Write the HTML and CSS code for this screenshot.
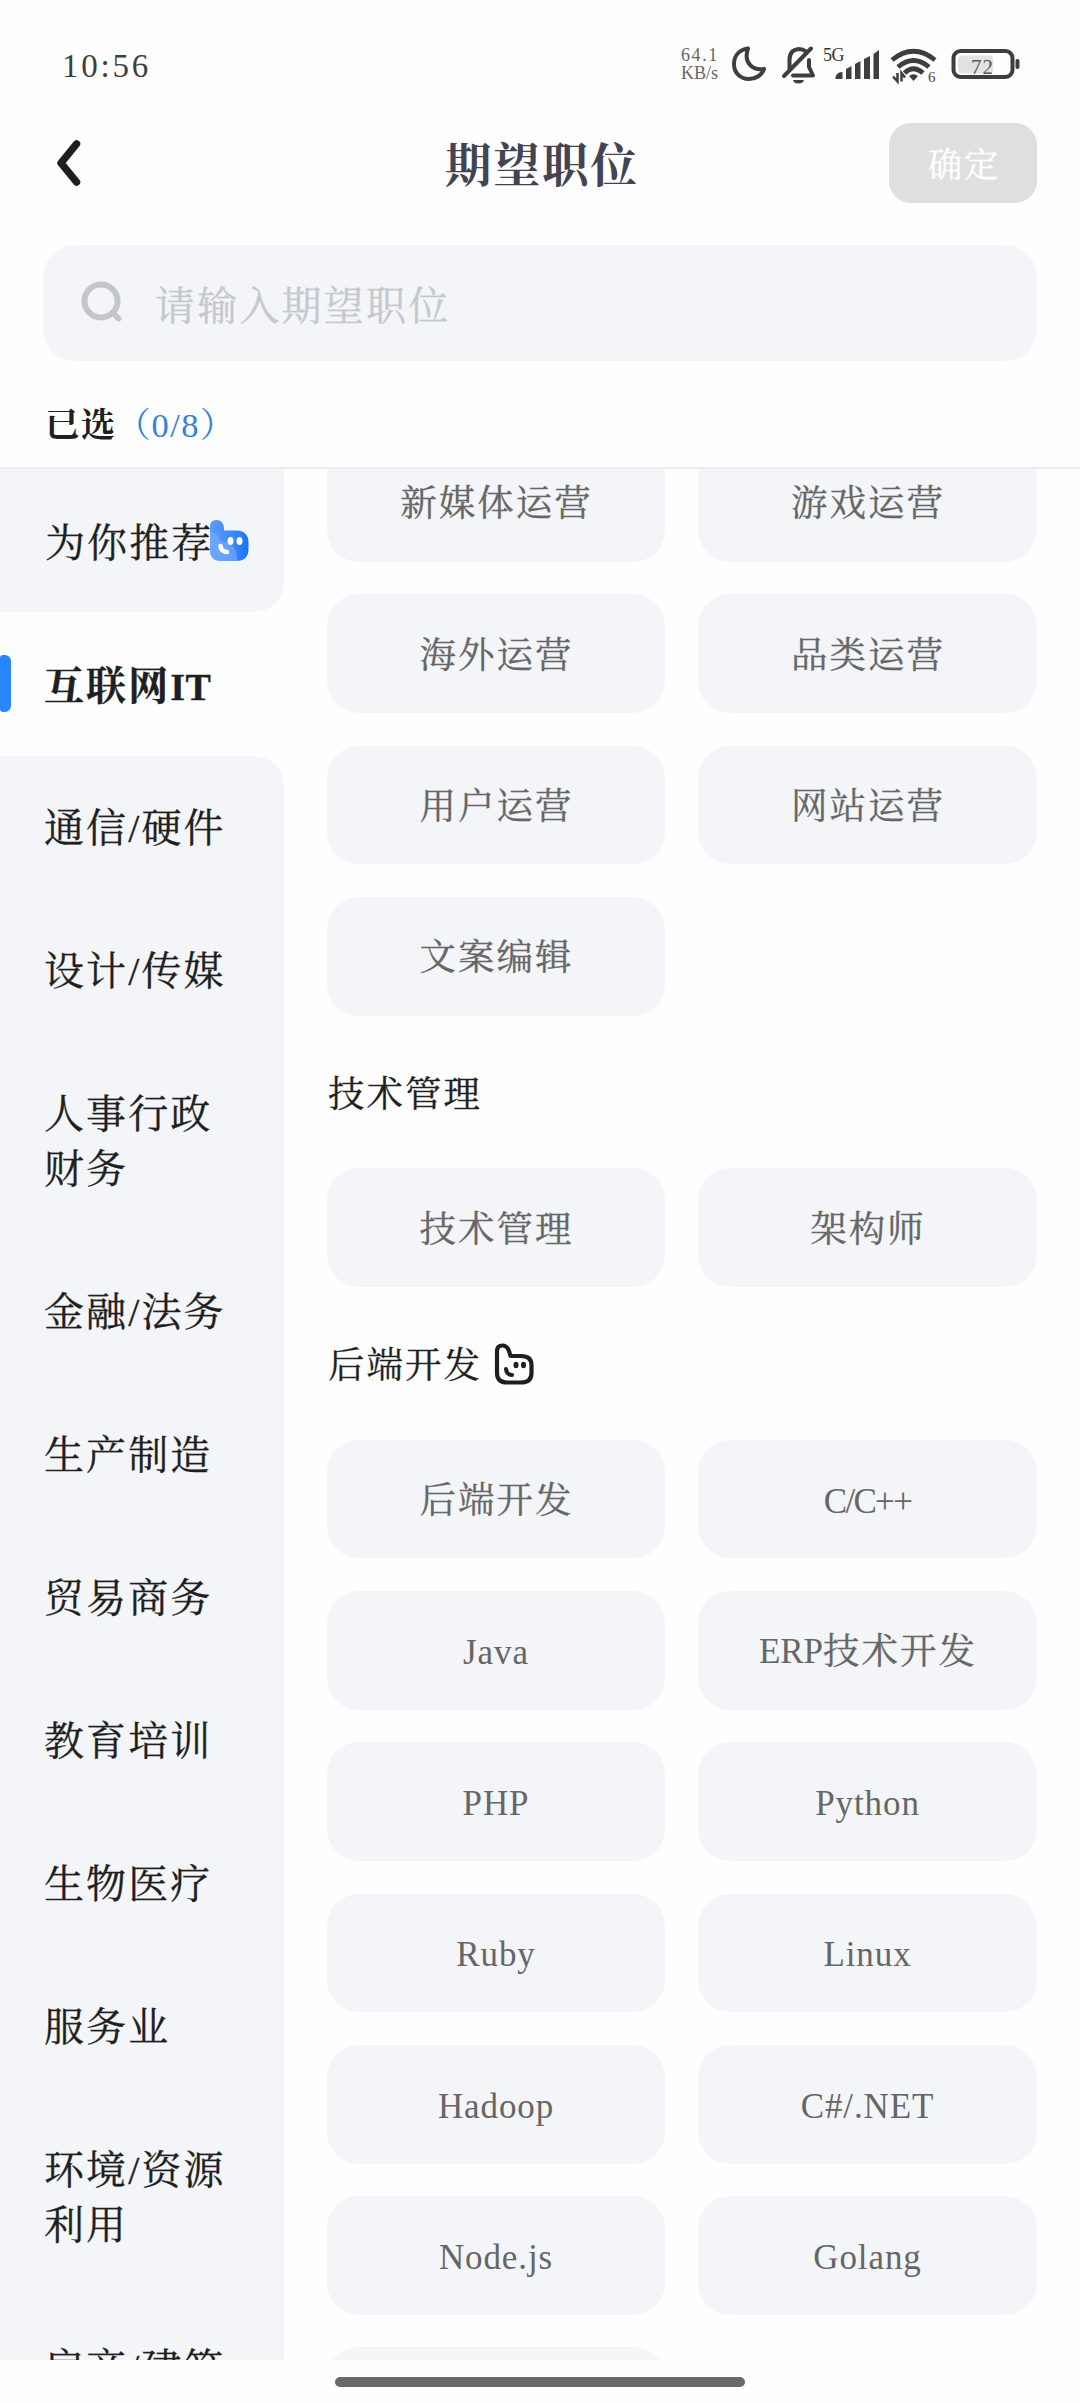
FILE: index.html
```html
<!DOCTYPE html>
<html lang="zh-CN">
<head>
<meta charset="utf-8">
<title>期望职位</title>
<link rel="stylesheet" href="styles.css">
</head>
<body>
<div class="screen">
  <div class="status">
    <span class="clock">10:56</span>
    <div class="net"><span>64.1</span><span class="unit">KB/s</span></div>
    <svg class="status-icons" viewBox="0 0 340 50" width="340" height="50">
      <g fill="none" stroke="#3e3e3e" stroke-width="4" stroke-linejoin="round" stroke-linecap="round">
        <path d="M19 10.500C9 12 5 19 5 26C5 35 11.500 41 20 41C27 41 33 37 35 31C24 33 14 25 19 10.500Z"/>
        <path d="M60.500 31V22C60.500 15 64 11.500 70 11Q74 11 77 13.500M64 37.500H84L80 29V22M55 38L82 10.500"/>
        <rect x="224.500" y="13" width="59" height="26" rx="7"/>
        <path d="M288.500 23V29"/>
      </g>
      <path d="M64 42H75Q74 45.500 69.500 45.500Q65 45.500 64 42Z" fill="#3e3e3e"/>
      <path d="M106.500 41V39Q108 34 113.500 34V41ZM117 41V31L122.500 28V41ZM126 41V26L131.500 23V41ZM135 41V21L141 18V41ZM144.500 41V16L150 12V41Z" fill="#3e3e3e"/>
      <g fill="none" stroke="#3e3e3e" stroke-width="4.800">
        <path d="M163 22Q184.500 4.500 206 22"/>
        <path d="M169 29Q184.500 16 200 29"/>
        <path d="M175.500 35Q184.500 26.500 194 35"/>
      </g>
      <path d="M180 38Q184.500 34.500 189 38L184.500 43Z" fill="#3e3e3e"/>
      <path d="M168.500 35V43.500L164 38.500M172.500 43.500V35L176 39.500" fill="none" stroke="#3e3e3e" stroke-width="2.500"/>
      <rect x="229" y="17.500" width="35" height="18" rx="4" fill="#e2e2e2"/>
      <text x="94" y="23" class="t5g">5G</text>
      <text x="199" y="44" class="t6">6</text>
      <text x="242" y="35.500" class="t72">72</text>
    </svg>
  </div>

  <header class="nav">
    <svg class="back" viewBox="0 0 26 48" width="26" height="48"><path d="M20.500 5L5 24L20.500 43" fill="none" stroke="#1f1f1f" stroke-width="7.500" stroke-linecap="round" stroke-linejoin="round"/></svg>
    <h1 class="title">期望职位</h1>
    <button class="confirm">确定</button>
  </header>

  <div class="search">
    <svg viewBox="0 0 44 44" width="44" height="44"><g fill="none" stroke="#c3c6ca" stroke-width="6" stroke-linecap="round"><circle cx="21" cy="21" r="16.500"/><path d="M33.500 33.500L38.500 38.500"/></g></svg>
    <span>请输入期望职位</span>
  </div>

  <div class="picked"><b>已选</b><span class="count">（<span class="num">0/8</span>）</span></div>

  <main class="body">
    <nav class="side">
      <div class="item before">为你推荐<svg class="thumb" viewBox="0 0 40 42" width="40" height="42">
        <defs><linearGradient id="blue" x1="0" y1="0" x2="1" y2="0"><stop offset="0" stop-color="#5b9bfa"/><stop offset=".55" stop-color="#4289fa"/><stop offset="1" stop-color="#1673ff"/></linearGradient></defs>
        <path d="M1 7Q1 0 7.500 0Q14 0 15 8V10.500H27Q39.500 10.500 39.500 23V29Q39.500 41 27 41H12Q1 41 1 30Z" fill="url(#blue)"/>
        <path d="M1 12Q10 13 12 21Q29 23 28 41H12Q1 41 1 30Z" fill="#7eb0ff" opacity=".55"/>
        <g fill="#fff"><ellipse cx="21.500" cy="21" rx="3" ry="4"/><ellipse cx="30.500" cy="21" rx="3" ry="4"/></g>
        <path d="M11.500 26Q12 31.500 18 32" fill="none" stroke="#fff" stroke-width="4.500" stroke-linecap="round"/>
      </svg></div>
      <div class="item active">互联网<span class="it">IT</span></div>
      <div class="rest">
        <div class="item">通信/硬件</div>
        <div class="item">设计/传媒</div>
        <div class="item">人事行政<br>财务</div>
        <div class="item">金融/法务</div>
        <div class="item">生产制造</div>
        <div class="item">贸易商务</div>
        <div class="item">教育培训</div>
        <div class="item">生物医疗</div>
        <div class="item">服务业</div>
        <div class="item">环境/资源<br>利用</div>
        <div class="item">房产/建筑</div>
      </div>
    </nav>
    <div class="jobs">
      <div class="grid first">
        <div class="chip">新媒体运营</div><div class="chip">游戏运营</div>
        <div class="chip">海外运营</div><div class="chip">品类运营</div>
        <div class="chip">用户运营</div><div class="chip">网站运营</div>
        <div class="chip">文案编辑</div>
      </div>
      <h2 class="group">技术管理</h2>
      <div class="grid">
        <div class="chip">技术管理</div><div class="chip">架构师</div>
      </div>
      <h2 class="group">后端开发<svg class="thumb-line" viewBox="0 0 40 42" width="40" height="42"><g fill="none" stroke="#1f1f1f" stroke-linecap="round" stroke-linejoin="round"><path d="M3 8Q3 2.500 8.500 2.500Q13 2.500 15 8L16.500 13H27Q37.500 13 37.500 22V30Q37.500 39.500 27 39.500H13Q3 39.500 3 30Z" stroke-width="4.200"/><path d="M12 26Q12.500 31.500 18 32" stroke-width="4"/></g><ellipse cx="22" cy="22" rx="2.500" ry="3.300" fill="#1f1f1f"/><ellipse cx="29.500" cy="22" rx="2.500" ry="3.300" fill="#1f1f1f"/></svg></h2>
      <div class="grid">
        <div class="chip">后端开发</div><div class="chip latin tight">C/C++</div>
        <div class="chip latin">Java</div><div class="chip"><span class="erp">ERP</span>技术开发</div>
        <div class="chip latin">PHP</div><div class="chip latin">Python</div>
        <div class="chip latin">Ruby</div><div class="chip latin">Linux</div>
        <div class="chip latin">Hadoop</div><div class="chip latin">C#/.NET</div>
        <div class="chip latin">Node.js</div><div class="chip latin">Golang</div>
        <div class="chip"></div>
      </div>
    </div>
  </main>
  <footer class="home"><div class="pill"></div></footer>
</div>
</body>
</html>
```
FILE: styles.css
```css
* { box-sizing: border-box; }
body { margin: 0; background: #fff; }
.screen {
  width: 1080px; height: 2403px; overflow: hidden;
  display: flex; flex-direction: column;
  background: #fefefe; color: #1f1f1f;
  font-family: "Liberation Serif", "Noto Serif CJK SC", "Noto Sans CJK SC", serif;
}
.status { height: 113px; padding: 38px 10px 0 62px; display: flex; align-items: flex-start; color: #3e3e3e; }
.clock { font-size: 33px; line-height: 57px; letter-spacing: 2.800px; width: 619px; flex: none; }
.net { display: flex; flex-direction: column; width: 48px; flex: none; padding-top: 8px; font-size: 18px; line-height: 18px; letter-spacing: 1.600px; color: #666; white-space: nowrap; }
.unit { letter-spacing: 0; }
.status-icons { flex: none; }
.t5g { font-size: 18px; fill: #333; letter-spacing: -.5px; }
.t6 { font-size: 15px; fill: #444; }
.t72 { font-size: 21px; fill: #555; letter-spacing: 1px; }

.nav { height: 100px; padding: 0 43px 0 56px; display: grid; grid-template-columns: 161px 1fr 148px; align-items: center; }
.title { margin: 0; padding: 7px 22px 0 0; text-align: center; font-size: 46.500px; line-height: 60px; font-weight: 700; letter-spacing: 2px; color: #434353; }
.confirm { height: 80px; width: 148px; border: 0; border-radius: 22px; background: #dddfe1; color: #fff; font: inherit; font-size: 34px; line-height: 60px; letter-spacing: 2px; padding: 5px 0 0 2px; -webkit-text-stroke: .4px #fff; }

.search { margin: 32px 43px 0; height: 116px; padding: 0 37px; border-radius: 32px; background: #f3f5f9; display: flex; align-items: center; gap: 31px; font-size: 40px; line-height: 60px; letter-spacing: 2.200px; color: #c5c8cc; -webkit-text-stroke: .3px #c5c8cc; }
.search svg { margin-bottom: 3px; }
.search span { padding-top: 8px; }

.picked { height: 108px; padding: 36px 0 0 45px; font-size: 34.500px; line-height: 56px; letter-spacing: 1px; border-bottom: 2px solid #ebecf0; }
.count { color: #3680df; letter-spacing: 1px; }
.num { letter-spacing: 1.500px; }

.body { height: 1891px; display: flex; overflow: hidden; }
.side { width: 284px; flex: none; font-size: 40px; line-height: 55px; letter-spacing: 2.100px; -webkit-text-stroke: .3px #1f1f1f; }
.item { padding: 45px 0 43px 44px; white-space: nowrap; }
.before { padding: 47px 0 41px 45px; background: #f3f5f9; border-radius: 0 0 30px 0; display: flex; align-items: center; }
.thumb { margin: -6px 0 0 -4px; }
.active { padding: 47px 0 41px 44px; font-weight: 700; position: relative; }
.active::before { content: ""; position: absolute; left: 0; top: 43px; width: 11px; height: 57px; border-radius: 3px 6px 6px 3px; background: #2a86ff; }
.it { font-size: 38px; letter-spacing: .5px; }
.rest { background: #f3f5f9; border-radius: 0 30px 0 0; }

.jobs { flex: 1; padding: 0 43px; }
.grid { display: grid; grid-template-columns: 338px 339px; column-gap: 33px; row-gap: 32.500px; }
.first { margin-top: -26px; }
.chip { height: 118.800px; border-radius: 32px; background: #f3f5f9; color: #666; display: flex; align-items: center; justify-content: center; padding: 4px 0 0 1px; font-size: 36.500px; line-height: 50px; letter-spacing: 2px; -webkit-text-stroke: .3px #666; }
.latin { font-size: 35px; letter-spacing: .9px; -webkit-text-stroke: 0; padding: 5px 0 0; }
.tight { letter-spacing: -1.700px; }
.erp { font-size: 35px; letter-spacing: 0; -webkit-text-stroke: 0; }
.group { margin: 0; height: 152.600px; padding: 6px 0 0 1px; display: flex; align-items: center; font-size: 36.500px; line-height: 50px; font-weight: 400; letter-spacing: 2px; -webkit-text-stroke: .3px #1f1f1f; }
.thumb-line { margin: -5px 0 0 12px; }

.home { flex: 1; display: flex; justify-content: center; padding-top: 17px; background: #fefefe; }
.pill { width: 410px; height: 10px; border-radius: 5px; background: #6a6a6a; }
```
